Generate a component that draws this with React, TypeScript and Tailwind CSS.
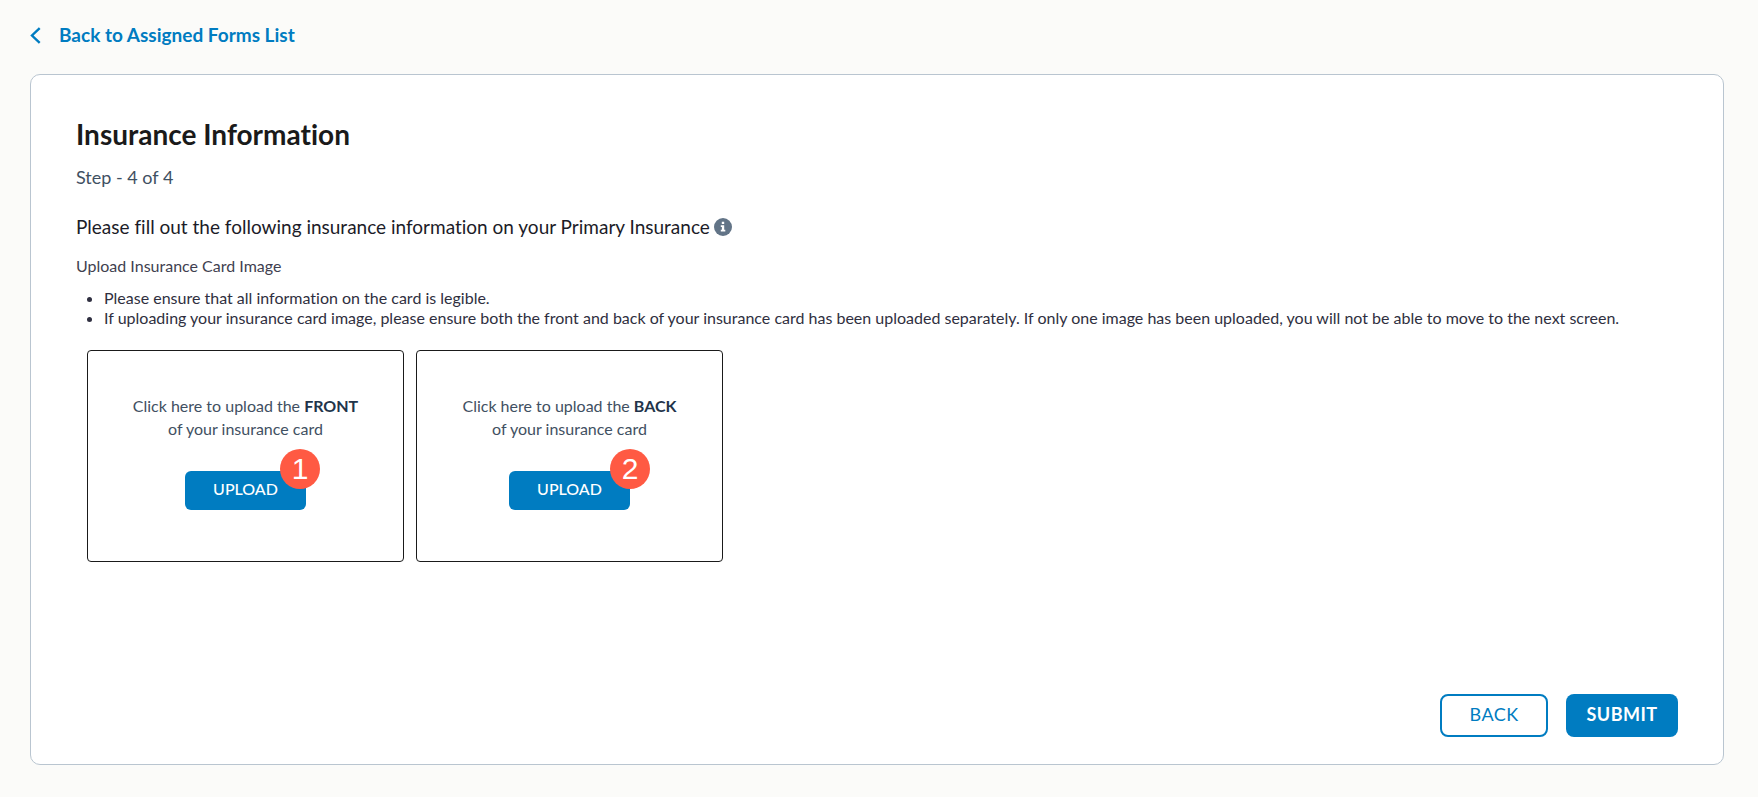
import React from "react";

type UploadBoxProps = {
  side: string;
  step: number;
  boxClass: string;
  badgeClass: string;
};

function UploadBox({ side, step, boxClass, badgeClass }: UploadBoxProps) {
  return (
    <section
      className={`flex h-[212px] flex-col items-center rounded border border-[#1a1a1a] pt-[43px] ${boxClass}`}
    >
      <p className="text-center text-[16px] leading-[23px] text-[#3f5062]">
        Click here to upload the <strong className="font-bold text-[#22344a]">{side}</strong>
        <br />
        of your insurance card
      </p>
      <div className="relative mt-[31px]">
        <button
          type="button"
          aria-label={`Upload ${side}`}
          className="h-[39px] w-[121px] rounded-md bg-[#007cc1] pb-[3px] text-[16px] leading-6 font-medium text-white"
        >
          UPLOAD
        </button>
        <span
          className={`absolute -top-[22px] flex size-10 items-center justify-center rounded-full bg-[#ff5a43] font-['Liberation_Sans',sans-serif] text-[30px] leading-10 text-white ${badgeClass}`}
        >
          {step}
        </span>
      </div>
    </section>
  );
}

export default function App() {
  return (
    <div className="flex min-h-screen flex-col bg-[#fbfbf9] pt-6 pr-[34px] pb-8 pl-[30px] font-['Lato',sans-serif] [font-variant-ligatures:none]">
      <nav className="flex">
        <a href="#forms" className="flex items-center text-[19px] leading-[22px] font-bold text-[#007cc1]">
          <svg
            width="11"
            height="17"
            viewBox="0 0 11 17"
            fill="none"
            stroke="currentColor"
            strokeWidth="2.4"
            className="mr-[18px]"
            aria-hidden="true"
          >
            <path d="M9.7 1.2 2 8.5l7.700 7.300" />
          </svg>
          Back to Assigned Forms List
        </a>
      </nav>
      <main className="mt-7 flex grow flex-col rounded-[10px] border border-[#b9c5d0] bg-white px-[45px] pt-[43px] pb-[27px]">
        <h1 className="text-[28px] leading-8 font-bold text-[#1a1a1a]">Insurance Information</h1>
        <p className="mt-[15px] text-[18px] leading-6 text-[#3f5062]">Step - 4 of 4</p>
        <h2 className="mt-[26px] flex items-center gap-1 text-[19px] leading-6 text-[#1c1c28]">
          Please fill out the following insurance information on your Primary Insurance
          <svg width="18" height="18" viewBox="0 0 18 18" role="img" aria-label="Information">
            <circle cx="9" cy="9" r="9" fill="#627487" />
            <path
              d="M7.800 3.800h2.400v2.200H7.800zM6.800 7.300h3.400v4.500h1.100v1.700H6.800v-1.700h1.100V9H6.800z"
              fill="#fff"
            />
          </svg>
        </h2>
        <p className="mt-[17px] text-[16px] leading-5 text-[#3f3f50]">Upload Insurance Card Image</p>
        <ul className="mt-3 list-disc pl-7 text-[16px] leading-5 text-[#2f2f40]">
          <li>Please ensure that all information on the card is legible.</li>
          <li>
            If uploading your insurance card image, please ensure both the front and back of your
            insurance card has been uploaded separately. If only one image has been uploaded, you will
            not be able to move to the next screen.
          </li>
        </ul>
        <div className="mt-[22px] flex flex-wrap gap-3 pl-[11px]">
          <UploadBox side="FRONT" step={1} boxClass="w-[317px]" badgeClass="-right-[14px]" />
          <UploadBox side="BACK" step={2} boxClass="w-[307px]" badgeClass="-right-5" />
        </div>
        <div className="mt-auto flex justify-end gap-[18px]">
          <button
            type="button"
            className="h-[43px] w-[108px] rounded-lg border-2 border-[#007cc1] pb-[3px] text-[18px] leading-6 tracking-wide text-[#007cc1]"
          >
            BACK
          </button>
          <button
            type="button"
            className="h-[43px] w-[112px] rounded-lg bg-[#007cc1] pb-[3px] text-[18px] leading-6 font-bold tracking-wide text-white"
          >
            SUBMIT
          </button>
        </div>
      </main>
    </div>
  );
}
